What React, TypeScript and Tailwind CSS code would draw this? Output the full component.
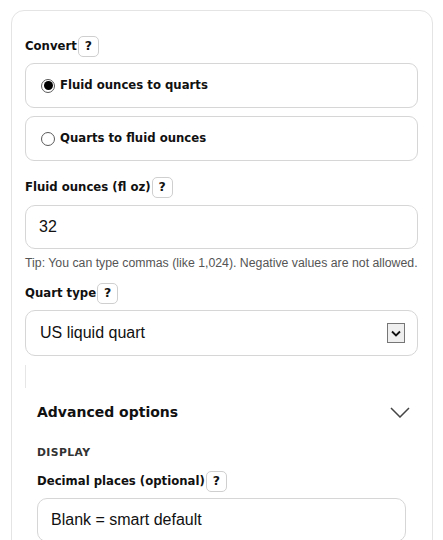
import React from "react";

const sans = { fontFamily: '"DejaVu Sans", Verdana, sans-serif' };
const arial = { fontFamily: '"Liberation Sans", Arial, sans-serif' };

function Help() {
  return (
    <span className="ml-px inline-flex h-[21px] w-[21px] items-center justify-center rounded-[5px] border border-[#cfcfcf] bg-white text-[12.5px] font-bold text-[#111]">
      ?
    </span>
  );
}

function Label({ children }: { children: React.ReactNode }) {
  return (
    <div className="flex h-[21px] items-center text-[11.7px] font-bold text-[#111]">
      <span className="pt-px">{children}</span>
      <Help />
    </div>
  );
}

function Radio({ checked, label }: { checked: boolean; label: string }) {
  return (
    <div className="flex h-[45px] items-center rounded-[9px] border border-[#d6d6d6] pl-[15px]">
      <span className="flex h-[14px] w-[14px] items-center justify-center rounded-full border border-[#5a5a5a] bg-white">
        {checked && <span className="h-[9px] w-[9px] rounded-full bg-black" />}
      </span>
      <span className="ml-[5px] text-[11.7px] font-bold text-[#111]">{label}</span>
    </div>
  );
}

export default function App() {
  return (
    <div className="min-h-[540px] bg-white" style={sans}>
      <div className="ml-[11px] pt-[10px]">
        <div className="h-[560px] w-[422px] rounded-[13px] border border-[#e4e4e4] pl-[13px] pr-[14px] pt-[25px]">
          <Label>Convert</Label>
          <div className="mt-[6px] flex flex-col gap-[8px]">
            <Radio checked label="Fluid ounces to quarts" />
            <Radio checked={false} label="Quarts to fluid ounces" />
          </div>

          <div className="mt-[16px]">
            <Label>Fluid ounces (fl oz)</Label>
          </div>
          <div
            className="mt-[7px] flex h-[44px] items-center rounded-[10px] border border-[#d6d6d6] pl-[13px] text-[16px] text-[#111]"
            style={arial}
          >
            32
          </div>
          <div
            className="mt-[6px] whitespace-nowrap text-[12.3px] leading-[16px] text-[#555]"
            style={arial}
          >
            Tip: You can type commas (like 1,024). Negative values are not allowed.
          </div>

          <div className="mt-[12px]">
            <Label>Quart type</Label>
          </div>
          <div
            className="mt-[6px] flex h-[46px] items-center justify-between rounded-[10px] border border-[#d6d6d6] pl-[14px] pr-[12px] text-[16px] text-[#111]"
            style={arial}
          >
            <span>US liquid quart</span>
            <span className="flex h-[20px] w-[18px] items-center justify-center border border-[#767676] bg-[#efefef]">
              <svg width="10" height="7" viewBox="0 0 10 7">
                <path d="M1 1.5 L5 5.5 L9 1.5" fill="none" stroke="#111" strokeWidth="1.8" />
              </svg>
            </span>
          </div>

          <div className="mt-[9px] h-[23px] w-px bg-[#e6e6e6]" />

          <div className="px-[12px]">
            <div className="flex h-[49px] items-center justify-between">
              <span className="text-[14px] font-bold text-[#111]">Advanced options</span>
              <svg width="20" height="11" viewBox="0 0 20 11" className="mr-[-4px]">
                <path d="M1 1 L10 10 L19 1" fill="none" stroke="#444" strokeWidth="1.5" />
              </svg>
            </div>
            <div className="mt-[9px] text-[10.8px] font-bold leading-[14px] tracking-[0.4px] text-[#333]">
              DISPLAY
            </div>
            <div className="mt-[11px]">
              <Label>Decimal places (optional)</Label>
            </div>
            <div
              className="mt-[6px] flex h-[44px] items-center rounded-[10px] border border-[#d6d6d6] pl-[13px] text-[16px] text-[#111]"
              style={arial}
            >
              Blank = smart default
            </div>
          </div>
        </div>
      </div>
    </div>
  );
}
